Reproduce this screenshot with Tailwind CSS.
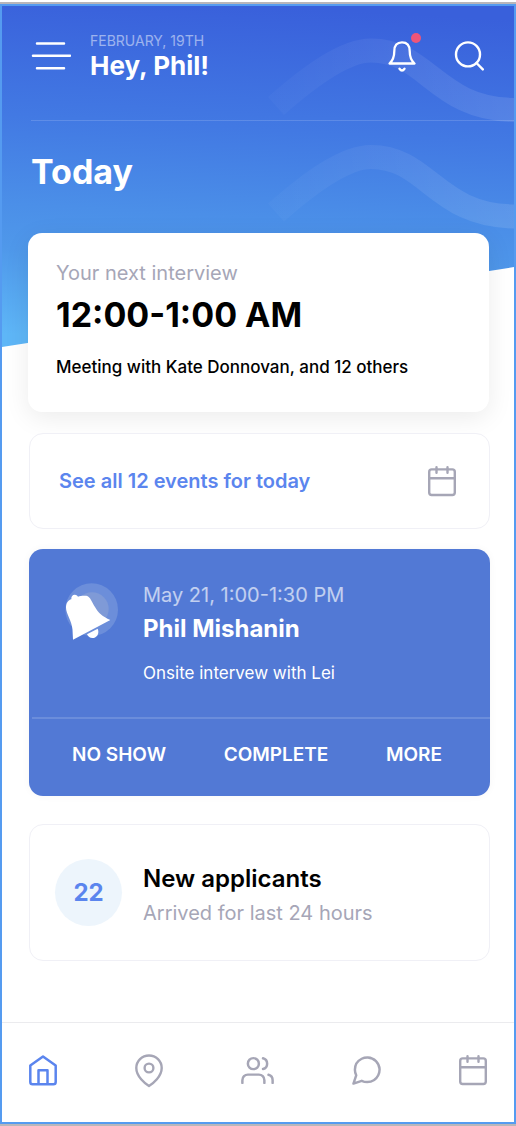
<!DOCTYPE html>
<html lang="en">
<head>
<meta charset="utf-8">
<meta name="viewport" content="width=device-width, initial-scale=1">
<title>Today</title>
<script src="https://cdn.jsdelivr.net/npm/@tailwindcss/browser@4"></script>
</head>
<body class="flex min-h-screen flex-col bg-white pt-0.5 font-['Inter','Liberation_Sans',sans-serif] text-black antialiased">
<div class="flex grow flex-col bg-[#b9b6ba] py-0.5">
<div class="relative flex grow flex-col overflow-hidden border-2 border-[#559bf0] bg-white">

  <!-- Slanted gradient backdrop with waves -->
  <svg class="absolute inset-x-0 top-0 h-[342px] w-full" viewBox="0 0 512 342" preserveAspectRatio="none" aria-hidden="true">
    <defs>
      <linearGradient id="sky" x1="266" y1="0" x2="246" y2="342" gradientUnits="userSpaceOnUse">
        <stop offset="0" stop-color="#3960db"/>
        <stop offset="0.36" stop-color="#4279e3"/>
        <stop offset="0.62" stop-color="#4b8fe8"/>
        <stop offset="0.75" stop-color="#4f98ea"/>
        <stop offset="1" stop-color="#5eb6f7"/>
      </linearGradient>
    </defs>
    <path d="M0 0H512V261L0 341Z" fill="url(#sky)"/>
  </svg>
  <svg class="absolute right-0 top-0 h-[240px] w-[250px]" viewBox="264 6 250 240" fill="none" stroke="url(#wave)" stroke-width="24" aria-hidden="true">
    <defs>
      <linearGradient id="wave" x1="266" y1="0" x2="514" y2="0" gradientUnits="userSpaceOnUse">
        <stop offset="0" stop-color="#fff" stop-opacity="0.02"/>
        <stop offset="1" stop-color="#fff" stop-opacity="0.11"/>
      </linearGradient>
    </defs>
    <path d="M276 106C310 76 345 50.500 371 50.500C428 50.500 436 110 516 110"/>
    <path d="M276 212.500C310 182.500 345 157 371 157C428 157 436 216.500 516 216.500"/>
  </svg>

  <header class="relative text-white">
    <div class="ml-[29px] flex h-[115px] items-start border-b border-white/15 pr-[30px] pt-7">
      <button type="button" aria-label="Menu" class="mt-1.5">
        <svg class="h-8 w-10" viewBox="0 0 40 32" fill="none" stroke="#fff" stroke-width="2.500" stroke-linecap="round"><path d="M6 3.500H33M2 15.700H39M6 28.300H33"/></svg>
      </button>
      <div class="ml-[19px]">
        <p class="text-sm leading-3.5 text-white/50">FEBRUARY, 19TH</p>
        <p class="mt-1 text-[26px] leading-7 font-bold">Hey, Phil!</p>
      </div>
      <button type="button" aria-label="Notifications" class="relative mt-[7px] ml-auto">
        <svg class="h-[31px] w-7" viewBox="0 0 28 31" fill="none" stroke="#fff" stroke-width="2.300" stroke-linecap="round" stroke-linejoin="round"><path d="M6.300 10C6.300 4.500 9 1.300 14 1.300S21.700 4.500 21.700 10C21.700 16 23 19.500 26.500 22.500H1.500C5 19.500 6.300 16 6.300 10ZM11.500 27.800Q14 31.200 16.500 27.800"/></svg>
        <span class="absolute -top-2 -right-[5px] size-2.5 rounded-full bg-[#ee5578]"></span>
      </button>
      <button type="button" aria-label="Search" class="mt-[7px] ml-[38px]">
        <svg class="h-[30px] w-[30px]" viewBox="0 0 30 30" fill="none" stroke="#fff" stroke-width="2.400" stroke-linecap="round"><circle cx="14" cy="13.400" r="12"/><path d="M22.500 22L28.800 28.400"/></svg>
      </button>
    </div>
    <h1 class="mt-[29px] ml-[29px] text-[34px] leading-11 font-bold">Today</h1>
  </header>

  <main class="relative flex flex-col pr-[25px] pl-[26px]">
    <section class="mt-[39px] h-[179px] rounded-[14px] bg-white px-7 pt-7 shadow-[0_6px_26px_rgba(0,0,0,0.08)]">
      <p class="text-xl leading-6 text-[#a6a6b7]">Your next interview</p>
      <h2 class="mt-2.5 text-[34px] leading-10 font-bold">12:00-1:00 AM</h2>
      <p class="mt-5 text-[17px] leading-6 font-medium">Meeting with Kate Donnovan, and 12 others</p>
    </section>

    <a href="#events" class="mt-[21px] -mr-px ml-px flex h-24 items-center justify-between rounded-[14px] border border-[#f0f0f6] bg-white pr-[33px] pl-[29px] text-xl font-semibold text-[#5b85ee]">
      See all 12 events for today
      <svg class="h-[31px] w-7" viewBox="0 0 28 31" fill="none" stroke="#a6a6b6" stroke-width="2.400" stroke-linecap="round"><rect x="1.200" y="3.400" width="25.600" height="25.600" rx="2.500"/><path d="M1.200 12.300H26.800M8.500 1.200V6.800M19.500 1.200V6.800"/></svg>
    </a>

    <section class="mt-5 -mr-px ml-px h-[247px] rounded-[14px] bg-[#5279d5] text-white shadow-[0_0_8px_rgba(0,0,0,0.04)]">
      <div class="flex h-[168px] pt-[34px] pl-9">
        <svg class="h-[58px] w-[54px] shrink-0" viewBox="46 38 162 174" aria-hidden="true">
          <circle cx="126" cy="118" r="79" fill="#6c8eda"/>
          <circle cx="127" cy="116" r="50" fill="#7f9ad7"/>
          <path fill="#fff" d="M70 208L68.500 178C67 152 49 130 49 112C49 98 56 89 65 87C64 77 71 72 78 74C82 75 84 78 85 79C92 75 104 76 110 76C122 78 128 98 136 110C147 129 158 138 182 149Z"/>
          <path fill="#fff" d="M112 192L144 175C150 189 142 203 128 203C121 203 115 199 112 192Z"/>
        </svg>
        <div class="ml-6">
          <p class="text-xl leading-6 text-white/65">May 21, 1:00-1:30 PM</p>
          <h2 class="mt-1.5 text-2xl leading-8 font-bold">Phil Mishanin</h2>
          <p class="mt-4 text-[17px] leading-6">Onsite intervew with Lei</p>
        </div>
      </div>
      <div class="ml-[3px] flex justify-between border-t-2 border-white/15 pt-[22px] pr-12 pl-10 text-[19px] leading-7 font-semibold">
        <button type="button">NO SHOW</button>
        <button type="button">COMPLETE</button>
        <button type="button">MORE</button>
      </div>
    </section>

    <section class="mt-7 -mr-px ml-px flex h-[137px] items-center rounded-[14px] border border-[#f0f0f6] bg-white pl-[25px]">
      <span class="flex size-[67px] items-center justify-center rounded-full bg-[#edf5fc] text-2xl font-bold text-[#5b85ee]">22</span>
      <div class="ml-[21px] pt-0.5">
        <h2 class="text-2xl leading-8 font-semibold">New applicants</h2>
        <p class="mt-1.5 text-xl leading-6 text-[#a6a6b7]">Arrived for last 24 hours</p>
      </div>
    </section>
  </main>

  <nav aria-label="Main" class="mt-auto flex h-[100px] items-center justify-between border-t border-[#ebebee] px-[27px] pb-1 text-[#a6a6b6]">
    <a href="#home" aria-label="Home" class="text-[#5b85ee]">
      <svg class="h-[31px] w-7" viewBox="0 0 28 31" fill="none" stroke="currentColor" stroke-width="2.500" stroke-linejoin="round"><path d="M1.300 10.500L14 1.500L26.700 10.500V27Q26.700 29.300 24.400 29.300H3.600Q1.300 29.300 1.300 27ZM9.500 29V15.300H18.500V29"/></svg>
    </a>
    <a href="#places" aria-label="Places">
      <svg class="h-[34px] w-7" viewBox="0 0 28 34" fill="none" stroke="currentColor" stroke-width="2.400" stroke-linejoin="round"><path d="M14 32C10 29.500 1.300 22.500 1.300 14A12.700 12.500 0 0 1 26.700 14C26.700 22.500 18 29.500 14 32Z"/><circle cx="14" cy="14" r="4.400"/></svg>
    </a>
    <a href="#people" aria-label="People">
      <svg class="size-[33px]" viewBox="0 0 24 24" fill="none" stroke="currentColor" stroke-width="1.800" stroke-linecap="round" stroke-linejoin="round"><path d="M17 21v-2a4 4 0 0 0-4-4H5a4 4 0 0 0-4 4v2M23 21v-2a4 4 0 0 0-3-3.870M16 3.130a4 4 0 0 1 0 7.750"/><circle cx="9" cy="7" r="4"/></svg>
    </a>
    <a href="#messages" aria-label="Messages">
      <svg class="size-[29px]" viewBox="2 2 20 20" fill="none" stroke="currentColor" stroke-width="1.700" stroke-linecap="round" stroke-linejoin="round"><path d="M21 11.500a8.380 8.380 0 0 1-.9 3.800 8.500 8.500 0 0 1-7.600 4.700 8.380 8.380 0 0 1-3.800-.9L3 21l1.900-5.700a8.380 8.380 0 0 1-.9-3.800 8.500 8.500 0 0 1 4.700-7.600 8.380 8.380 0 0 1 3.800-.9h.5a8.480 8.480 0 0 1 8 8v.5z"/></svg>
    </a>
    <a href="#calendar" aria-label="Calendar">
      <svg class="h-[31px] w-7" viewBox="0 0 28 31" fill="none" stroke="currentColor" stroke-width="2.400" stroke-linecap="round"><rect x="1.200" y="3.400" width="25.600" height="25.600" rx="2.500"/><path d="M1.200 12.300H26.800M8.500 1.200V6.800M19.500 1.200V6.800"/></svg>
    </a>
  </nav>
</div>
</div>
</body>
</html>
